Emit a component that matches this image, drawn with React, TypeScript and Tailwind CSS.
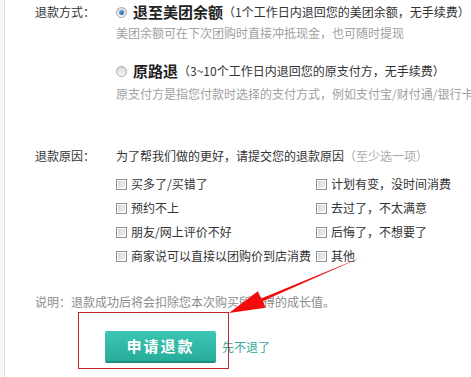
import React from 'react';

const reasons: [string, string][] = [
  ['买多了/买错了', '计划有变，没时间消费'],
  ['预约不上', '去过了，不太满意'],
  ['朋友/网上评价不好', '后悔了，不想要了'],
  ['商家说可以直接以团购价到店消费', '其他'],
];

function Radio({ checked }: { checked?: boolean }) {
  return (
    <span className="mr-[6px] flex h-[11px] w-[11px] shrink-0 items-center justify-center rounded-full border border-[#a7a7a7] bg-gradient-to-b from-[#d9d9d9] to-[#f6f6f6]">
      {checked && (
        <span className="h-[5px] w-[5px] rounded-full bg-gradient-to-br from-[#6fb0e8] to-[#1b5e9e]" />
      )}
    </span>
  );
}

function Box() {
  return (
    <span className="mr-[4px] flex h-[11px] w-[11px] shrink-0 border border-[#8e8e8e] bg-white p-px">
      <span className="h-full w-full bg-gradient-to-br from-[#d4d4d4] to-[#f4f4f4]" />
    </span>
  );
}

export default function App() {
  return (
    <div
      className="relative h-[377px] w-[471px] overflow-hidden bg-[#f6f6f6] pl-[4px] text-[12px] text-[#333]"
      style={{ fontFamily: '"Noto Sans CJK SC", "Noto Sans", sans-serif' }}
    >
      <div className="h-full overflow-hidden border-l border-[#dcdcdc] bg-white pl-[30px]">
        {/* 退款方式 */}
        <div className="flex">
          <div className="w-[81px] shrink-0 leading-[24px]">退款方式：</div>
          <div className="min-w-0 flex-1 whitespace-nowrap">
            <div className="flex h-[24px] items-center">
              <Radio checked />
              <span className="text-[15px] font-bold text-[#222]">退至美团余额</span>
              <span>（1个工作日内退回您的美团余额，无手续费）</span>
            </div>
            <div className="h-[18px] leading-[18px] text-[#a0a0a0]">美团余额可在下次团购时直接冲抵现金，也可随时提现</div>
            <div className="mt-[17px] flex h-[24px] items-center">
              <Radio />
              <span className="text-[15px] font-bold text-[#222]">原路退</span>
              <span>（3~10个工作日内退回您的原支付方，无手续费）</span>
            </div>
            <div className="h-[22px] leading-[22px] text-[#a0a0a0]">原支付方是指您付款时选择的支付方式，例如支付宝/财付通/银行卡</div>
          </div>
        </div>

        {/* 退款原因 */}
        <div className="mt-[41px] flex">
          <div className="w-[81px] shrink-0 leading-[20px]">退款原因：</div>
          <div className="min-w-0 flex-1 whitespace-nowrap">
            <div className="h-[20px] leading-[20px]">
              为了帮我们做的更好，请提交您的退款原因
              <span className="text-[#aaa]">（至少选一项）</span>
            </div>
            <div className="mt-[6px] grid grid-cols-[200px_1fr]">
              {reasons.map(([a, b]) => (
                <React.Fragment key={a}>
                  <div className="flex h-[24px] items-center">
                    <Box />
                    {a}
                  </div>
                  <div className="flex h-[24px] items-center">
                    <Box />
                    {b}
                  </div>
                </React.Fragment>
              ))}
            </div>
          </div>
        </div>

        <div className="mt-[24px] h-[20px] leading-[20px] text-[#8c8c8c]">说明：退款成功后将会扣除您本次购买所获得的成长值。</div>

        <div className="mt-[19px] flex items-center">
          <button className="ml-[70px] h-[32px] w-[111px] rounded-[2px] border-b-2 border-[#1d8f80] bg-gradient-to-b from-[#3cc6b4] to-[#28ac9a] text-[15px] font-bold tracking-[2px] text-white">
            申请退款
          </button>
          <a className="ml-[6px] text-[#2fa99b]">先不退了</a>
        </div>
      </div>

      {/* annotation: red box + arrow */}
      <div className="pointer-events-none absolute left-[78px] top-[312px] h-[57px] w-[151px] border border-[#c0262c]" />
      <svg className="pointer-events-none absolute left-0 top-0" width="471" height="377">
        <polygon
          points="362,257 263,301 265.5,307.8 229,313 257.8,291.2 261.2,298.6"
          fill="#f20d0d"
        />
      </svg>
    </div>
  );
}
